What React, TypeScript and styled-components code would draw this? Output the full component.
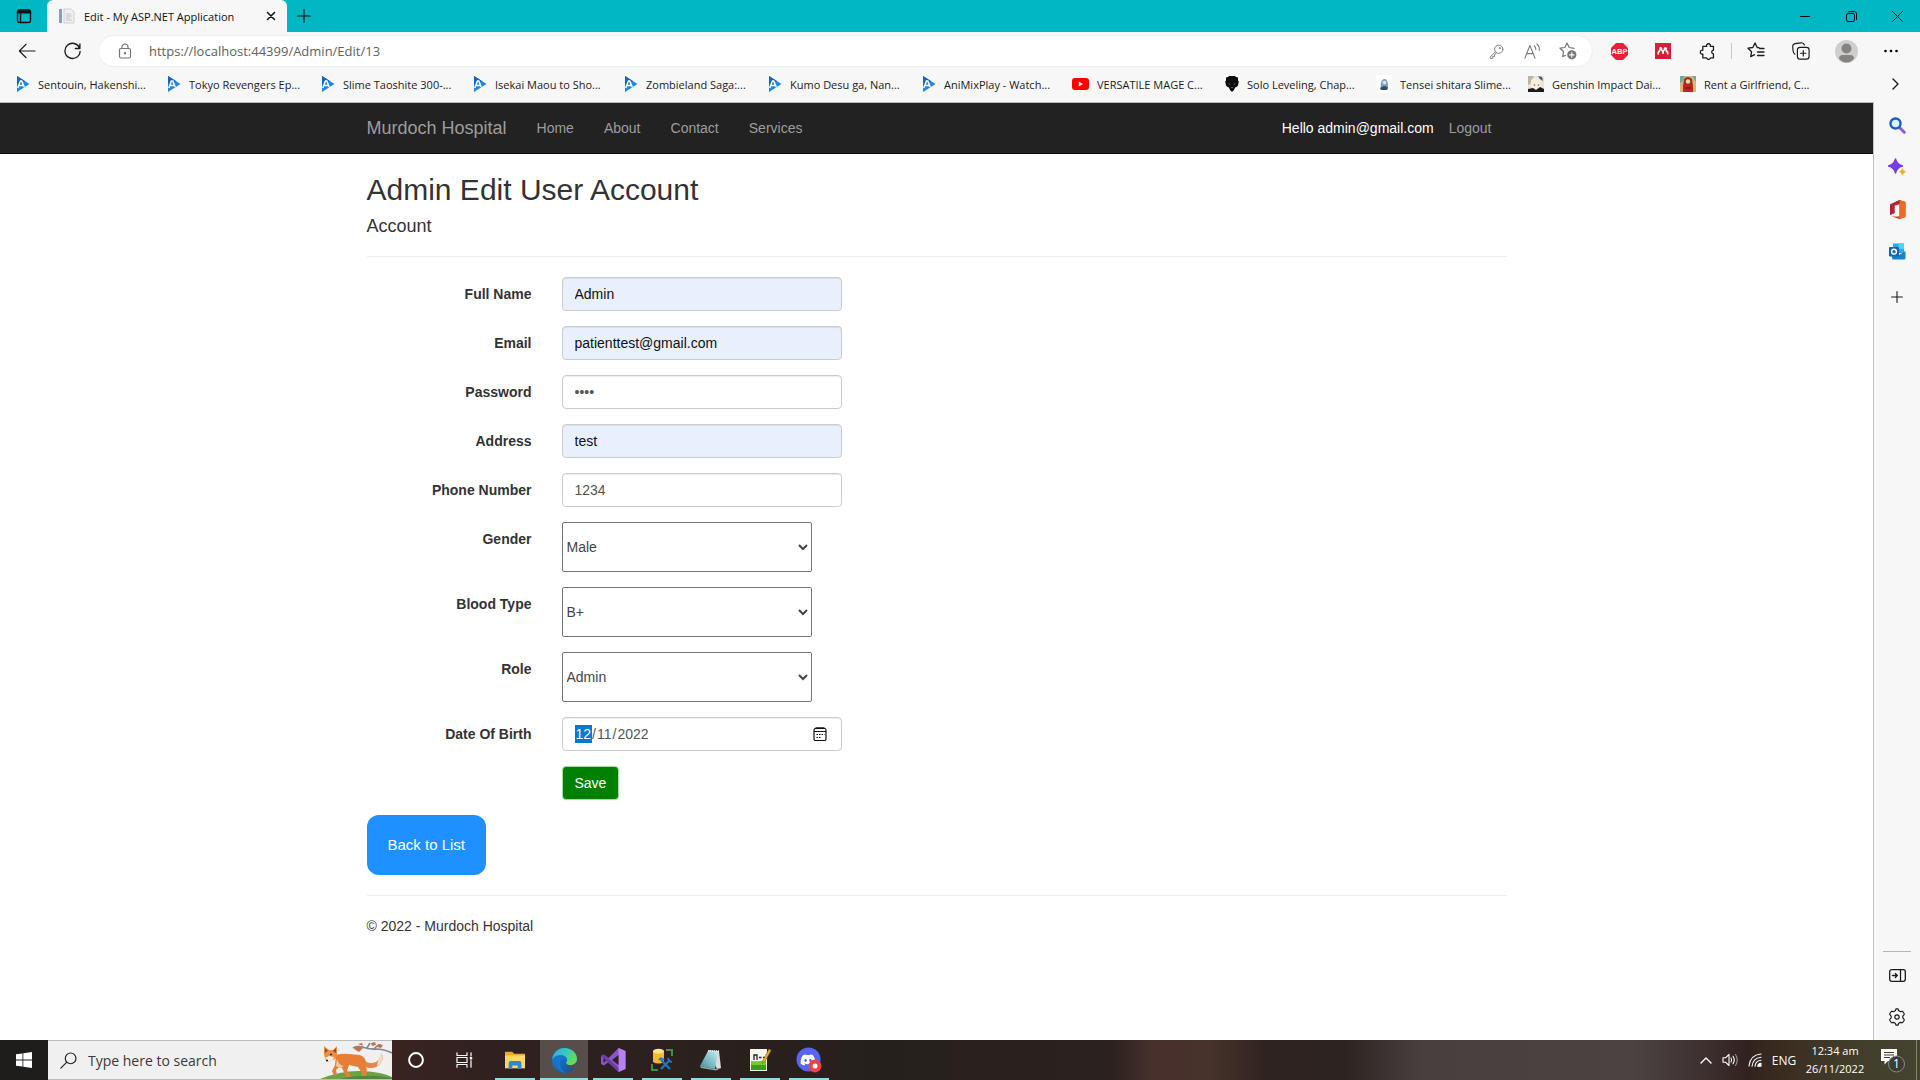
import React from "react";
import styled, { createGlobalStyle } from "styled-components";
import { FaDiscord } from "react-icons/fa";

const UI = `"Open Sans", "Noto Sans", sans-serif`;
const WEB = `"Liberation Sans", Arial, sans-serif`;

const CALENDAR = `url("data:image/svg+xml,%3Csvg xmlns='http://www.w3.org/2000/svg' viewBox='0 0 14 14' fill='none' stroke='%23111' stroke-width='1.2'%3E%3Crect x='1' y='1.500' width='12' height='12' rx='1.500'/%3E%3Cpath d='M1 4.500h12M2.500.8h9'/%3E%3Cpath d='M3.500 7.500h8M3.500 10.500h5' stroke-dasharray='1.5 1'/%3E%3C/svg%3E")`;

const GlobalStyle = createGlobalStyle`
  *, *::before, *::after { box-sizing: border-box; }
  body { margin: 0; background: #fff; }
  button { border: 0; padding: 0; background: none; color: inherit; font: inherit; cursor: pointer; }
  a { color: inherit; text-decoration: none; }
  svg { display: block; flex: none; }
`;

const Desktop = styled.div`
  display: flex;
  flex-direction: column;
  min-height: 100vh;
  font-family: ${UI};
`;

/* ---------- browser chrome ---------- */

const TitleBar = styled.header`
  display: flex;
  align-items: stretch;
  height: 32px;
  background: #00b7c3;
  color: #111;
`;

const TabActions = styled.button`
  display: grid;
  place-items: center;
  width: 47px;
`;

const Tab = styled.div`
  display: flex;
  align-items: center;
  gap: 9px;
  width: 240px;
  padding: 0 11px;
  border-radius: 6px 6px 0 0;
  background: #f7f7f7;
  font-size: 11px;
  white-space: nowrap;
`;

const TabTitle = styled.span`
  flex: 1;
`;

const NewTab = styled.button`
  display: grid;
  place-items: center;
  width: 34px;
`;

const WindowButtons = styled.div`
  display: flex;
  margin-left: auto;
`;

const WindowButton = styled.button`
  display: grid;
  place-items: center;
  width: 46px;
`;

const Toolbar = styled.div`
  display: flex;
  align-items: center;
  height: 38px;
  padding: 0 7px 0 4px;
  background: #f7f7f7;
  color: #1b1b1b;
`;

const ToolButton = styled.button<{ $w?: number }>`
  display: grid;
  place-items: center;
  width: ${(p) => p.$w ?? 44}px;
  height: 30px;
`;

const AddressBar = styled.div`
  display: flex;
  flex: 1;
  align-items: center;
  height: 32px;
  margin: 0 4px;
  padding: 0 6px 0 18px;
  border: 1px solid #efefef;
  border-radius: 16px;
  background: #fff;
  color: #767676;
`;

const AddressInput = styled.input`
  flex: 1;
  min-width: 0;
  margin-left: 16px;
  padding: 0;
  border: 0;
  outline: 0;
  background: transparent;
  color: #606060;
  font: 13px ${UI};
`;

const Divider = styled.span`
  width: 1px;
  height: 16px;
  margin: 0 2px;
  background: #c8c8c8;
`;

const ToolGroup = styled.div<{ $gap?: number }>`
  display: flex;
  align-items: center;
  gap: ${(p) => p.$gap ?? 0}px;
`;

const BookmarkBar = styled.nav`
  display: flex;
  align-items: center;
  height: 32px;
  padding: 0 12px 4px 16px;
  background: #f7f7f7;
  color: #1b1b1b;
  font-size: 11px;
`;

const Bookmark = styled.a<{ $w: number }>`
  display: flex;
  align-items: center;
  gap: 8px;
  width: ${(p) => p.$w}px;
  white-space: nowrap;
`;

const MoreBookmarks = styled.button`
  display: grid;
  place-items: center;
  width: 26px;
  height: 24px;
  margin-left: auto;
`;

const BrowserBody = styled.div`
  display: flex;
  flex: 1;
`;

const Sidebar = styled.aside`
  display: flex;
  flex-direction: column;
  align-items: center;
  width: 47px;
  padding: 2px 0;
  border-left: 1px solid #c3c3c3;
  background: #f7f7f7;
  color: #1b1b1b;
`;

const SideButton = styled.button`
  display: grid;
  place-items: center;
  width: 42px;
  height: 42px;
`;

const SideAdd = styled(SideButton)`
  margin-top: 4px;
`;

const SideSpacer = styled.span`
  flex: 1;
`;

const SideRule = styled.span`
  width: 28px;
  height: 1px;
  margin-bottom: 2px;
  background: #b5b5b5;
`;

/* ---------- web page ---------- */

const Page = styled.div`
  flex: 1;
  border-top: 1px solid #b9b9b9;
  background: #fff;
  color: #333;
  font: 14px/20px ${WEB};
`;

const Navbar = styled.div`
  margin-bottom: -1px;
  border-bottom: 1px solid #080808;
  background: #222;
`;

const Container = styled.div`
  width: 100%;
  max-width: 1170px;
  margin: 0 auto;
  padding: 0 15px;
`;

const Main = styled.main`
  display: flow-root;
  width: 100%;
  max-width: 1170px;
  margin: 0 auto;
  padding: 0 15px;
`;

const NavRow = styled(Container)`
  display: flex;
  align-items: center;
  height: 50px;
  color: #9d9d9d;
`;

const Brand = styled.a`
  padding-right: 15px;
  font-size: 18px;
`;

const NavLink = styled.a`
  padding: 15px;
`;

const Hello = styled.span`
  margin-left: auto;
  color: #fff;
`;

const Title = styled.h2`
  margin: 20px 0 10px;
  font-size: 30px;
  font-weight: 500;
  line-height: 33px;
`;

const Subtitle = styled.h4`
  margin: 10px 0;
  font-size: 18px;
  font-weight: 500;
  line-height: 20px;
`;

const Rule = styled.hr`
  margin: 20px 0;
  border: 0;
  border-top: 1px solid #eee;
`;

const FormRow = styled.div`
  display: grid;
  grid-template-columns: 165px minmax(0, 1fr);
  column-gap: 30px;
  align-items: start;
  margin-bottom: 15px;
`;

const Label = styled.label`
  padding-top: 7px;
  font-weight: 700;
  text-align: right;
`;

const TextInput = styled.input<{ $filled?: boolean }>`
  width: 100%;
  max-width: 280px;
  height: 34px;
  padding: 6px 12px;
  border: 1px solid #ccc;
  border-radius: 4px;
  outline: 0;
  background: ${(p) => (p.$filled ? "#e8f0fe" : "#fff")};
  box-shadow: inset 0 1px 1px rgba(0, 0, 0, 0.075);
  color: ${(p) => (p.$filled ? "#111" : "#555")};
  font: 14px/20px ${WEB};

  &::-webkit-datetime-edit-month-field {
    background: #0078d7;
    color: #fff;
  }

  &::-webkit-calendar-picker-indicator {
    background-image: ${CALENDAR};
  }
`;

const Select = styled.select`
  width: 250px;
  max-width: 100%;
  height: 50px;
  border: 1px solid #767676;
  border-radius: 2px;
  background-color: #fff;
  color: #444;
  font: 14px/20px ${WEB};
`;

const SaveButton = styled.button`
  grid-column: 2;
  justify-self: start;
  height: 34px;
  padding: 0 12px;
  border: 1px solid #a9dba9;
  border-radius: 4px;
  background: #008000;
  color: #fff;
`;

const BackButton = styled.button`
  display: block;
  height: 60px;
  padding: 0 21px;
  border-radius: 12px;
  background: #1e90ff;
  color: #fff;
  font-size: 15px;
`;

const Footer = styled.p`
  margin: 0 0 10px;
`;

/* ---------- taskbar ---------- */

const Taskbar = styled.footer`
  display: flex;
  align-items: stretch;
  height: 40px;
  color: #fff;
  background: linear-gradient(
    90deg,
    #1f1c1c 0%,
    #1f1c1c 3%,
    #3a2420 20%,
    #2f211f 26%,
    #26201d 46%,
    #2b221f 58%,
    #48302d 60%,
    #48322b 63%,
    #2e2320 66%,
    #2d2421 70%,
    #48403e 74%,
    #4b4342 85%,
    #403534 88%,
    #32221f 91%,
    #3a2d20 93%,
    #413c2a 96%,
    #45442f 100%
  );
`;

const StartButton = styled.button`
  display: grid;
  place-items: center;
  width: 48px;
`;

const SearchBox = styled.label`
  display: flex;
  align-items: center;
  width: 344px;
  padding-left: 12px;
  border: solid #bdbdbd;
  border-width: 1px 0;
  background: #f0f0f0;
  color: #222;
`;

const SearchInput = styled.input`
  flex: 1;
  min-width: 0;
  margin-left: 11px;
  padding: 0;
  border: 0;
  outline: 0;
  background: transparent;
  font: 14px ${UI};
  &::placeholder {
    color: #3a3a3a;
  }
`;

const TaskGroup = styled.div<{ $gap: number }>`
  display: flex;
  gap: ${(p) => p.$gap}px;
  margin-right: 3px;
`;

const TaskButton = styled.button<{ $state?: "open" | "active" }>`
  display: grid;
  place-items: center;
  width: 48px;
  background: ${(p) =>
    p.$state === "active"
      ? "linear-gradient(#8fdede, #8fdede) bottom / 48px 2px no-repeat, #574d4b"
      : p.$state === "open"
      ? "linear-gradient(#8fdede, #8fdede) bottom / 40px 2px no-repeat"
      : "none"};
`;

const Tray = styled.div`
  display: flex;
  align-items: center;
  margin-left: auto;
  font-size: 12px;
`;

const TrayButton = styled.button<{ $w: number }>`
  display: grid;
  place-items: center;
  width: ${(p) => p.$w}px;
  height: 40px;
`;

const Clock = styled.time`
  width: 70px;
  font-size: 11px;
  line-height: 18px;
  text-align: center;
`;

const ShowDesktop = styled.span`
  align-self: stretch;
  width: 4px;
  border-left: 1px solid #85836f;
`;

/* ---------- icons ---------- */

type IconProps = { size?: number; w?: number; sw?: number; children: React.ReactNode; box?: string };

const Line = ({ size = 20, w = size, sw = 1.2, box = "0 0 20 20", children }: IconProps) => (
  <svg width={w} height={size} viewBox={box} fill="none" stroke="currentColor" strokeWidth={sw} strokeLinecap="round" strokeLinejoin="round" aria-hidden="true">
    {children}
  </svg>
);

const AniIcon = () => (
  <svg width="14" height="18" viewBox="0 0 14 18" aria-hidden="true">
    <path d="M1 1 13.500 9 1 17z" fill="#1e88e5" />
    <path d="M1 1 9 6 1 10z" fill="#1565c0" />
    <path d="m1.800 13 2.600-7h1.400l2.400 6M3 10.500h4" fill="none" stroke="#fff" strokeWidth="1.500" />
  </svg>
);

const YoutubeIcon = () => (
  <svg width="17" height="14" viewBox="0 0 17 14" aria-hidden="true">
    <rect y="1" width="17" height="12" rx="3" fill="#f00" />
    <path d="m6.800 4.600 4.200 2.400-4.200 2.400z" fill="#fff" />
  </svg>
);

const SkullIcon = () => (
  <svg width="14" height="18" viewBox="0 0 14 18" aria-hidden="true">
    <path d="M1 2.500 3 2l1-1h6l1 1 2 .5v3l.8 1-.8 4-1.500 1.500-1.500.5-1 2.500L7 17l-2-2-1-2.500-1.500-.5L1 10.500l-.8-4 .8-1z" fill="#0c0c0c" />
    <path d="m3.500 8.500 2 1.200M10.500 8.500l-2 1.200M6 12.500h2" stroke="#777" strokeWidth=".7" />
  </svg>
);

const SlimeIcon = () => (
  <svg width="16" height="18" viewBox="0 0 16 18" aria-hidden="true">
    <rect width="16" height="18" fill="#fff" />
    <path d="M5 14c-1-4 0-10 3.500-10S12 9 12 13z" fill="#7da3bb" />
    <path d="M4 13q5-4 8 0l-1 2H5z" fill="#2f5268" />
    <circle cx="8.500" cy="7.500" r="1.800" fill="#dbe7ee" />
  </svg>
);

const GenshinIcon = () => (
  <svg width="16" height="16" viewBox="0 0 16 16" aria-hidden="true">
    <rect width="16" height="16" fill="#e9e2d6" />
    <path d="M0 0h6L2 8l-2 1z" fill="#bdb6a6" />
    <path d="M3 4q4-4 9 0l1 7-5 3-5-3z" fill="#faeedd" />
    <path d="m10 0 4 1 1 4-3-2z" fill="#46566b" />
    <circle cx="6.500" cy="9" r=".8" fill="#a8622a" />
    <circle cx="10.500" cy="9" r=".8" fill="#a8622a" />
    <path d="M0 16v-3l5-1 3 2 4-3 4 2v3z" fill="#1c1b1e" />
  </svg>
);

const RentIcon = () => (
  <svg width="16" height="16" viewBox="0 0 16 16" aria-hidden="true">
    <rect width="16" height="16" fill="#d9b777" />
    <path d="M0 0h5L2 6 0 7zM12 0h4v6z" fill="#6eaaa2" />
    <path d="M4 3q4-4 8 0l1 8H3z" fill="#90331f" />
    <circle cx="8" cy="5.500" r="2.300" fill="#f3cfae" />
    <path d="M3 9q5-2 10 0v7H3z" fill="#c41f25" />
    <path d="M5 12h6" stroke="#711012" />
  </svg>
);

const ICONS = { ani: AniIcon, yt: YoutubeIcon, skull: SkullIcon, slime: SlimeIcon, genshin: GenshinIcon, rent: RentIcon };

const BOOKMARKS: { text: string; icon: keyof typeof ICONS; w: number }[] = [
  { text: "Sentouin, Hakenshi...", icon: "ani", w: 151 },
  { text: "Tokyo Revengers Ep...", icon: "ani", w: 154 },
  { text: "Slime Taoshite 300-...", icon: "ani", w: 152 },
  { text: "Isekai Maou to Sho...", icon: "ani", w: 151 },
  { text: "Zombieland Saga:...", icon: "ani", w: 144 },
  { text: "Kumo Desu ga, Nan...", icon: "ani", w: 154 },
  { text: "AniMixPlay - Watch...", icon: "ani", w: 150 },
  { text: "VERSATILE MAGE C...", icon: "yt", w: 153 },
  { text: "Solo Leveling, Chap...", icon: "skull", w: 151 },
  { text: "Tensei shitara Slime...", icon: "slime", w: 152 },
  { text: "Genshin Impact Dai...", icon: "genshin", w: 152 },
  { text: "Rent a Girlfriend, C...", icon: "rent", w: 152 },
];

const Fox = () => (
  <svg width="72" height="38" viewBox="0 0 72 38" aria-hidden="true">
    <path d="M0 38q22-9 42-8t30 6v2z" fill="#69a344" />
    <path d="M20 38q24-6 52-1v1z" fill="#4f8b36" />
    <path d="M72 12q-8-4-16-4-7 .5-14-2-5-1-9 1M54 8q3-4 7-4M47 7l3-5" fill="none" stroke="#7f8791" strokeWidth="1.600" />
    <path d="m34 8 4-3 5 2-4 4zM38 3l4-1 1 3zM51 2l4-1 1 3-4 1zM58 3l5 1-2 3-4-1z" fill="#c96d4a" />
    <path d="M42 18q7 6 14 3 5-3 5-9 3 3 1 8-4 8-13 7-5-1-8-3z" fill="#e08a4c" />
    <path d="M61 12q3 3 1 8-2 4-5 5 0-4 2-7z" fill="#f2d9c6" />
    <path d="M16 14q6-2 13-1l11 1q7 3 6 10l1 8-1 3h-5l1-3-4-6-9-2-2 6 4 4-1 2h-4l-4-9-3-1-3 3 1 5-3 1-2-5 3-6z" fill="#e67f35" />
    <path d="m4 5 5 4h4l4-4v8q0 5-4 6l-5 2-3-3-1-5z" fill="#ee8e45" />
    <path d="m5 7 3 3-3 2zM16 7l-3 3 3 2z" fill="#9a4a22" />
    <path d="m5 17 4-2 5 1-1 3-5 2z" fill="#faeee2" />
    <circle cx="7" cy="19.500" r="1.100" fill="#2b1b16" />
    <circle cx="11" cy="13.500" r=".9" fill="#2b1b16" />
    <path d="M17 18q2 7 7 7l-4 2-4-2z" fill="#f6c79c" />
  </svg>
);

const EdgeLogo = () => (
  <svg width="25" height="25" viewBox="0 0 24 24" aria-hidden="true">
    <defs>
      <linearGradient id="edgeTop" x1="0" y1="0" x2="1" y2=".5">
        <stop offset="0" stopColor="#2fa9e6" />
        <stop offset=".5" stopColor="#35c7c5" />
        <stop offset="1" stopColor="#66dd56" />
      </linearGradient>
      <linearGradient id="edgeLow" x1="0" y1="0" x2="1" y2="1">
        <stop offset="0" stopColor="#1787d8" />
        <stop offset="1" stopColor="#0f4d9a" />
      </linearGradient>
    </defs>
    <circle cx="12" cy="12" r="12" fill="url(#edgeLow)" />
    <path d="M.2 11C1 4.500 6 0 12 0c7 0 12 5 12 10.500 0 4-3 6-6.500 6-3 0-4.500-1.200-4-2.500 1-1 1.200-2 1-3C13.800 8.500 11 7 8 7 4 7 1 9 .2 11z" fill="url(#edgeTop)" />
    <path d="M13.500 14c-.5 1.500 1.500 2.600 4 2.600 2.200 0 4.200-.8 5.400-2.400L24 17l-1.500 1.500c-2 1-4.500 1.200-6.500.2-2-1-3-3-2.500-4.700z" fill="#574d4b" />
    <path d="M8 7c-5 1-6 8-3 12 2 3 5 5 9 4.800C8 22 7 15 8.500 12 9.500 10 12 10 14 12c1-3-2-5.500-6-5z" fill="#1b74c9" />
  </svg>
);

const TASKS: { name: string; active?: boolean; icon: React.ReactNode }[] = [
  {
    name: "File Explorer",
    icon: (
      <svg width="22" height="20" viewBox="0 0 24 22">
        <path d="M1 2h8l2 2h12v16H1z" fill="#e9ab2d" />
        <path d="M1 6h22v14H1z" fill="#fdd667" />
        <path d="M5 21v-7q0-2 2-2h10q2 0 2 2v7h-4v-4H9v4z" fill="#2f86d1" />
      </svg>
    ),
  },
  { name: "Microsoft Edge", active: true, icon: <EdgeLogo /> },
  {
    name: "Visual Studio",
    icon: (
      <svg width="25" height="24" viewBox="0 0 25 24">
        <path d="m17.500 0 7 3v18l-7 3L7.500 14 3 17.500 0 16V8l3-1.500L7.500 10z" fill="#8a55c9" />
        <path d="m17.500 0 7 3v18l-7 3z" fill="#b583ea" />
        <path d="M17.500 7v10L11 12zM2.500 9v6l3-3z" fill="#2c211f" />
        <path d="M0 8l3-1.500L17.500 20v4z" fill="#6b3da6" />
      </svg>
    ),
  },
  {
    name: "SQL Server Management Studio",
    icon: (
      <svg width="24" height="24" viewBox="0 0 24 24">
        <path d="M3 3v11q5 3 11 0V3z" fill="#f5b92e" />
        <ellipse cx="8.500" cy="3.200" rx="5.500" ry="2.400" fill="#ffe28a" />
        <path d="M16 2h6v6M2 16v6h6" fill="none" stroke="#3f8f46" strokeWidth="2" />
        <path d="m11 12 9 9M20 12l-9 9" stroke="#2473bd" strokeWidth="2.400" />
        <path d="M9 12q2-3 5 0M18 10l1 3 3 1" fill="none" stroke="#2473bd" strokeWidth="2" />
      </svg>
    ),
  },
  {
    name: "Notepad",
    icon: (
      <svg width="24" height="24" viewBox="0 0 24 24">
        <defs>
          <linearGradient id="pad" x1="0" y1="1" x2="1" y2="0">
            <stop offset="0" stopColor="#3f8f9b" />
            <stop offset="1" stopColor="#c5edf1" />
          </linearGradient>
        </defs>
        <path d="m9 2 11 1 2 17-4 1z" fill="#d8dede" />
        <path d="M9 3h10l-3 18-15-3z" fill="url(#pad)" />
        <path d="m1 18 15 3 6-1-5 2.500L2 20z" fill="#8fa6aa" />
        <path d="M9 3h11" stroke="#e9f4f5" strokeWidth="1.500" strokeDasharray="1 1" />
      </svg>
    ),
  },
  {
    name: "Notepad++",
    icon: (
      <svg width="24" height="24" viewBox="0 0 24 24">
        <path d="M2 1h17v22H2z" fill="#f4f7ec" />
        <path d="M3 13q8 1 15-1v10H3z" fill="#78c82d" />
        <path d="M3 17h15v5H3z" fill="#3d9a22" />
        <path d="M6 12V7h3v5M11 9.500h2.500M15 9.500h2" fill="none" stroke="#222" strokeWidth="1.300" />
        <path d="m21 1 2 1.500-6 11-2.500 2 .5-3z" fill="#e3b02e" stroke="#8a6515" strokeWidth=".6" />
      </svg>
    ),
  },
  {
    name: "Discord",
    icon: (
      <svg width="26" height="26" viewBox="0 0 26 26">
        <circle cx="12.500" cy="12.500" r="12" fill="#5865f2" />
        <FaDiscord x="4" y="5" width="16" height="14" color="#fff" />
        <circle cx="19" cy="19" r="6.500" fill="#ed4245" />
        <circle cx="19" cy="19" r="2.500" fill="#fff" />
      </svg>
    ),
  },
];

/* ---------- form fields ---------- */

const SelectField = ({ id, label, value, options }: { id: string; label: string; value: string; options: string[] }) => (
  <FormRow>
    <Label htmlFor={id}>{label}</Label>
    <Select id={id} defaultValue={value}>
      {options.map((o) => (
        <option key={o}>{o}</option>
      ))}
    </Select>
  </FormRow>
);

const Field = ({ id, label, value, type = "text", filled }: { id: string; label: string; value: string; type?: string; filled?: boolean }) => (
  <FormRow>
    <Label htmlFor={id}>{label}</Label>
    <TextInput id={id} type={type} defaultValue={value} $filled={filled} />
  </FormRow>
);

export default function App() {
  return (
    <Desktop>
      <GlobalStyle />
      <TitleBar>
        <TabActions aria-label="Tab actions">
          <Line size={16} box="0 0 16 16" sw={1.4}>
            <rect x="1.500" y="2" width="13" height="12.500" rx="2" />
            <path d="M2.500 4h11" strokeWidth="3" />
            <path d="M4.500 6v8" />
          </Line>
        </TabActions>
        <Tab>
          <svg width="17" height="16" viewBox="0 0 17 16" aria-hidden="true">
            <path d="M1 1h3v14H1z" fill="#6fa9c4" />
            <path d="M6 1h7l3 3v11H6z" fill="#eef0f1" stroke="#c3c8cb" strokeWidth=".8" />
            <path d="M8 6h5M8 8h6M8 10h4M8 12h6" stroke="#b4babd" strokeWidth=".8" />
          </svg>
          <TabTitle>Edit - My ASP.NET Application</TabTitle>
          <button aria-label="Close tab">
            <Line size={10} box="0 0 10 10" sw={1.5}>
              <path d="m1.500 1.500 7 7M8.500 1.500l-7 7" />
            </Line>
          </button>
        </Tab>
        <NewTab aria-label="New tab">
          <Line size={14} box="0 0 14 14">
            <path d="M7 .6v12.800M.6 7h12.800" />
          </Line>
        </NewTab>
        <WindowButtons>
          <WindowButton aria-label="Minimize">
            <Line size={10} box="0 0 10 10" sw={1}>
              <path d="M0 5.500h10" />
            </Line>
          </WindowButton>
          <WindowButton aria-label="Restore">
            <Line size={11} box="0 0 11 11" sw={1}>
              <rect x=".5" y="2.500" width="8" height="8" rx="1.500" />
              <path d="M2.500.7H8.500Q10.500.7 10.500 2.700V8.500" />
            </Line>
          </WindowButton>
          <WindowButton aria-label="Close">
            <Line size={11} box="0 0 11 11" sw={1}>
              <path d="m.5.5 10 10M10.500.5l-10 10" />
            </Line>
          </WindowButton>
        </WindowButtons>
      </TitleBar>

      <Toolbar>
        <ToolButton $w={46} aria-label="Back">
          <Line size={18}>
            <path d="M19 10H1.500M9 2.500 1.500 10 9 17.500" />
          </Line>
        </ToolButton>
        <ToolButton aria-label="Refresh">
          <Line size={19} sw={1.4}>
            <path d="M17.500 6.500A8 8 0 1 0 18 10M17.800 2v4.800H13" />
          </Line>
        </ToolButton>
        <AddressBar>
          <Line size={16} box="0 0 16 16">
            <rect x="2.500" y="5.500" width="11" height="9.500" rx="1.500" />
            <path d="M5 5.500V4a3 3 0 0 1 6 0v1.500" />
            <circle cx="8" cy="10.200" r=".6" fill="currentColor" />
          </Line>
          <AddressInput aria-label="Address" defaultValue="https://localhost:44399/Admin/Edit/13" />
          <ToolButton $w={36} aria-label="Saved passwords">
            <Line size={15} sw={1.3}>
              <circle cx="13" cy="7" r="5.500" />
              <path d="m8.500 10.500-7 7V19H5v-2.500h2.500V14L9.800 12" />
              <circle cx="14.500" cy="5.500" r=".6" />
            </Line>
          </ToolButton>
          <ToolButton $w={36} aria-label="Read aloud">
            <Line size={17}>
              <path d="M1 18 7 3l6 15M3.200 12.500h7.600M12 3q2 1.800 2 5M15 1q3.500 2.600 3 8" />
            </Line>
          </ToolButton>
          <ToolButton $w={36} aria-label="Add to favorites">
            <Line size={18} box="0 0 18 18">
              <path d="M15 6.300 10.200 5.500 8 1 5.800 5.500 1 6.200l3.600 3.500-.9 5L6.500 13.300" />
              <circle cx="12.800" cy="12.800" r="4.600" fill="currentColor" stroke="none" />
              <path d="M12.800 10.500v4.600M10.500 12.800h4.600" stroke="#fff" />
            </Line>
          </ToolButton>
        </AddressBar>
        <ToolButton aria-label="Adblock Plus">
          <svg width="17" height="17" viewBox="0 0 18 18">
            <path d="M5.300 0h7.400L18 5.300v7.400L12.700 18H5.300L0 12.700V5.300z" fill="#e8203a" />
            <text x="9" y="12" textAnchor="middle" fill="#fff" fontFamily="Liberation Sans" fontSize="8" fontWeight="700">ABP</text>
          </svg>
        </ToolButton>
        <ToolButton aria-label="Mendeley">
          <svg width="16" height="16" viewBox="0 0 16 16">
            <rect width="16" height="16" fill="#d51f38" />
            <circle cx="5.600" cy="5.600" r="1.600" fill="#fff" />
            <circle cx="10.400" cy="5.600" r="1.600" fill="#fff" />
            <path d="M3.200 11.500q-.2-3 2.200-4.200M8 11V9q0-1.500-1.800-2.500M12.800 11.500q.2-3-2.200-4.200M8 9q0-1.500 1.800-2.500" fill="none" stroke="#fff" strokeWidth="1.600" />
          </svg>
        </ToolButton>
        <ToolButton aria-label="Extensions">
          <Line size={17} sw={1.5}>
            <path d="M4.500 4H9a2.300 2.300 0 1 1 4.300 0H17v4.600a2 2 0 0 0 0 4.200V17.500h-3.500a2.300 2.300 0 0 1-4.500 0H4.500V13a2.300 2.300 0 1 1 0-4.400z" />
          </Line>
        </ToolButton>
        <Divider />
        <ToolGroup $gap={1}>
          <ToolButton aria-label="Favorites">
            <Line size={18} box="0 0 18 18" sw={1.3}>
              <path d="M12 5.700 10.200 5.500 8 1 5.800 5.500 1 6.200l3.600 3.500-.9 5L7.500 12.700" />
              <path d="M12.500 6.500H17M10.500 10H17M10.500 13.500H17" />
            </Line>
          </ToolButton>
          <ToolButton aria-label="Collections">
            <Line size={18} sw={1.3}>
              <rect x="6" y="6" width="13" height="13" rx="3" />
              <path d="M12.500 9.500v6M9.500 12.500h6M3.300 13.500Q1.500 12.500 1.200 10L.8 5.500q-.2-3 2.600-3.700L10 .9q3-.3 3.800 2.400" />
            </Line>
          </ToolButton>
          <ToolButton aria-label="Profile">
            <svg width="23" height="23" viewBox="0 0 23 23">
              <circle cx="11.500" cy="11.500" r="11.500" fill="#d0cecc" />
              <circle cx="11.500" cy="8.500" r="5" fill="#858280" />
              <path d="M4 18.500q0-3.500 3.500-3.500h8q3.500 0 3.500 3.500-3 4-7.500 4T4 18.500z" fill="#858280" />
            </svg>
          </ToolButton>
          <ToolButton aria-label="Settings and more">
            <svg width="14" height="4" viewBox="0 0 14 4">
              <circle cx="1.500" cy="2" r="1.300" />
              <circle cx="7" cy="2" r="1.300" />
              <circle cx="12.500" cy="2" r="1.300" />
            </svg>
          </ToolButton>
        </ToolGroup>
      </Toolbar>

      <BookmarkBar aria-label="Favorites bar">
        {BOOKMARKS.map((b) => {
          const Icon = ICONS[b.icon];
          return (
            <Bookmark key={b.text} href="#" $w={b.w}>
              <Icon />
              {b.text}
            </Bookmark>
          );
        })}
        <MoreBookmarks aria-label="More favorites">
          <Line size={12} w={7} box="0 0 7 12" sw={1.4}>
            <path d="m1 1 5 5-5 5" />
          </Line>
        </MoreBookmarks>
      </BookmarkBar>

      <BrowserBody>
        <Page>
          <Navbar>
            <NavRow as="nav">
              <Brand href="#">Murdoch Hospital</Brand>
              <NavLink href="#">Home</NavLink>
              <NavLink href="#">About</NavLink>
              <NavLink href="#">Contact</NavLink>
              <NavLink href="#">Services</NavLink>
              <Hello>Hello admin@gmail.com</Hello>
              <NavLink href="#">Logout</NavLink>
            </NavRow>
          </Navbar>
          <Main>
            <Title>Admin Edit User Account</Title>
            <form onSubmit={(e) => e.preventDefault()}>
              <Subtitle>Account</Subtitle>
              <Rule />
              <Field id="name" label="Full Name" value="Admin" filled />
              <Field id="email" label="Email" value="patienttest@gmail.com" filled />
              <Field id="password" label="Password" value="test" type="password" />
              <Field id="address" label="Address" value="test" filled />
              <Field id="phone" label="Phone Number" value="1234" />
              <SelectField id="gender" label="Gender" value="Male" options={["Male", "Female"]} />
              <SelectField id="blood" label="Blood Type" value="B+" options={["A+", "A-", "B+", "B-", "AB+", "AB-", "O+", "O-"]} />
              <SelectField id="role" label="Role" value="Admin" options={["Admin", "Doctor", "Patient"]} />
              <Field id="dob" label="Date Of Birth" value="2022-12-11" type="date" />
              <FormRow>
                <SaveButton type="submit">Save</SaveButton>
              </FormRow>
            </form>
            <BackButton type="button">Back to List</BackButton>
            <Rule />
            <Footer>© 2022 - Murdoch Hospital</Footer>
          </Main>
        </Page>
        <Sidebar>
          <SideButton aria-label="Search">
            <svg width="17" height="17" viewBox="0 0 17 17">
              <path d="m10.500 10.500 4.800 4.800" stroke="#8b5be0" strokeWidth="3" strokeLinecap="round" />
              <circle cx="6.500" cy="6.500" r="5" fill="#e2f2fc" stroke="#1c5fc0" strokeWidth="2.400" />
            </svg>
          </SideButton>
          <SideButton aria-label="Discover">
            <svg width="18" height="18" viewBox="0 0 18 18">
              <path d="M7.500 1q1.300 5.500 7 7-5.700 1.300-7 7-1.400-5.700-7-7 5.600-1.500 7-7z" fill="#7a3be6" stroke="#7a3be6" strokeWidth="1.400" strokeLinejoin="round" />
              <path d="M14.500 10.500q.7 2.500 3 3.300-2.300.8-3 3.300-.7-2.500-3-3.300 2.300-.8 3-3.300z" fill="#f3ab24" stroke="#f3ab24" strokeWidth=".6" />
            </svg>
          </SideButton>
          <SideButton aria-label="Office">
            <svg width="17" height="19" viewBox="0 0 17 19">
              <path d="M10.500 0 16.500 2v15l-6 2L3 16.500h7.500V4L5.500 5.500V13L1 15V4.500z" fill="#d83b1d" />
              <path d="M10.500 0 16.500 2v15l-6 2z" fill="#ef6a25" />
              <path d="M1 4.500 10.500 0v4L5.500 5.500V13L1 15z" fill="#b0253a" />
            </svg>
          </SideButton>
          <SideButton aria-label="Outlook">
            <svg width="17" height="17" viewBox="0 0 17 17">
              <path d="M4 .5h11V10H4z" fill="#28a8ea" />
              <path d="M9.500.5H15V6H9.500z" fill="#50d0f5" />
              <path d="M3 8l7 4 6.500-4v7q0 1.500-1.500 1.500H4.500Q3 16.500 3 15z" fill="#1384d0" />
              <rect y="4" width="10" height="9.500" rx="1" fill="#0f64b5" />
              <circle cx="5" cy="8.700" r="2.400" fill="none" stroke="#fff" strokeWidth="1.500" />
            </svg>
          </SideButton>
          <SideAdd aria-label="Add app">
            <Line size={12} box="0 0 12 12" sw={1.1}>
              <path d="M6 .6v10.800M.6 6h10.800" />
            </Line>
          </SideAdd>
          <SideSpacer />
          <SideRule />
          <SideButton aria-label="Hide sidebar">
            <Line size={13} w={17} box="0 0 17 13" sw={1.3}>
              <rect x=".7" y=".7" width="15.600" height="11.600" rx="2" />
              <path d="M11.500 1v11M3.500 6.500H8M6.300 4.500l2 2-2 2" />
            </Line>
          </SideButton>
          <SideButton aria-label="Settings">
            <Line size={18} sw={1.3}>
              <path d="M8.300 2.800 8.800 1h2.400l.5 1.800 2.100 1.300 2.300-.5 1.600 2.200q.7 1.200 0 1.800L16.500 9v2l1.200 1.400q.7.600 0 1.800l-1.600 2.200-2.300-.5-2.100 1.300-.5 1.800H8.800l-.5-1.800-2.100-1.300-2.300.5-1.600-2.200q-.7-1.200 0-1.800L3.500 11V9L2.300 7.600q-.7-.600 0-1.800l1.600-2.200 2.300.5z" />
              <circle cx="10" cy="10" r="2.400" />
            </Line>
          </SideButton>
        </Sidebar>
      </BrowserBody>

      <Taskbar>
        <StartButton aria-label="Start">
          <svg width="16" height="16" viewBox="0 0 16 16" fill="#fff">
            <path d="M0 2.300 6.500 1.400v6.100H0zM7.300 1.300 16 0v7.500H7.300zM0 8.400h6.500v6.200L0 13.700zM7.300 8.400H16V16l-8.700-1.300z" />
          </svg>
        </StartButton>
        <SearchBox>
          <Line size={17} sw={1.4}>
            <circle cx="12.500" cy="7.500" r="6.300" />
            <path d="M8 12 1 19" />
          </Line>
          <SearchInput aria-label="Search" placeholder="Type here to search" />
          <Fox />
        </SearchBox>
        <TaskGroup $gap={0}>
          <TaskButton aria-label="Cortana">
            <svg width="16" height="16" viewBox="0 0 16 16">
              <circle cx="8" cy="8" r="6.900" fill="none" stroke="#fff" strokeWidth="2" />
            </svg>
          </TaskButton>
          <TaskButton aria-label="Task view">
            <Line size={16} w={17} box="0 0 17 16" sw={1.2}>
              <path d="M1 .8v2.700h10V.8M1 15.200v-2.700h10v2.700M1 5.500h10v5H1zM15 .8v3.200M15 8.500v6.700" />
              <path d="M15 5v2.500" strokeWidth="2.400" strokeLinecap="butt" />
            </Line>
          </TaskButton>
        </TaskGroup>
        <TaskGroup $gap={1}>
          {TASKS.map((t) => (
            <TaskButton key={t.name} aria-label={t.name} $state={t.active ? "active" : "open"}>
              {t.icon}
            </TaskButton>
          ))}
        </TaskGroup>
        <Tray>
          <TrayButton $w={24} aria-label="Show hidden icons">
            <Line size={7} w={12} box="0 0 12 7" sw={1.4}>
              <path d="m1 6 5-5 5 5" />
            </Line>
          </TrayButton>
          <TrayButton $w={24} aria-label="Volume">
            <Line size={14} w={17} box="0 0 17 14" sw={1.1}>
              <path d="M1 4.800h2.500L7 1.500v11L3.500 9.200H1zM9 5q1.300 2 0 4M11 3.300q2.500 3.700 0 7.400" />
              <path d="M13.500 1.500q3.500 5.500 0 11" opacity=".5" />
            </Line>
          </TrayButton>
          <TrayButton $w={26} aria-label="Network">
            <Line size={14} box="0 0 14 14" sw={1.1}>
              <path d="M1 13Q2 2 13 1M4 13.200Q5 5 13 4.200M7 13.200Q7.500 8 13 7.300" />
              <path d="M9.800 13.200Q10 10.500 13 10.400v2.800z" fill="currentColor" />
            </Line>
          </TrayButton>
          <TrayButton $w={32} aria-label="Input language">ENG</TrayButton>
          <Clock dateTime="2022-11-26T00:34">
            12:34 am
            <br />
            26/11/2022
          </Clock>
          <TrayButton $w={46} aria-label="Notifications, 1 new">
            <svg width="26" height="26" viewBox="0 0 26 26">
              <path d="M1 2h16v12H8l-3.500 3.500V14H1z" fill="#fff" />
              <path d="M4 5.500h10M4 8h10M4 10.500h6" stroke="#3f3a29" strokeWidth="1.100" />
              <circle cx="16.500" cy="17" r="8" fill="#3b3b38" stroke="#8b8b86" />
              <text x="16.500" y="21" textAnchor="middle" fill="#fff" fontFamily="Open Sans" fontSize="12">1</text>
            </svg>
          </TrayButton>
          <ShowDesktop />
        </Tray>
      </Taskbar>
    </Desktop>
  );
}
